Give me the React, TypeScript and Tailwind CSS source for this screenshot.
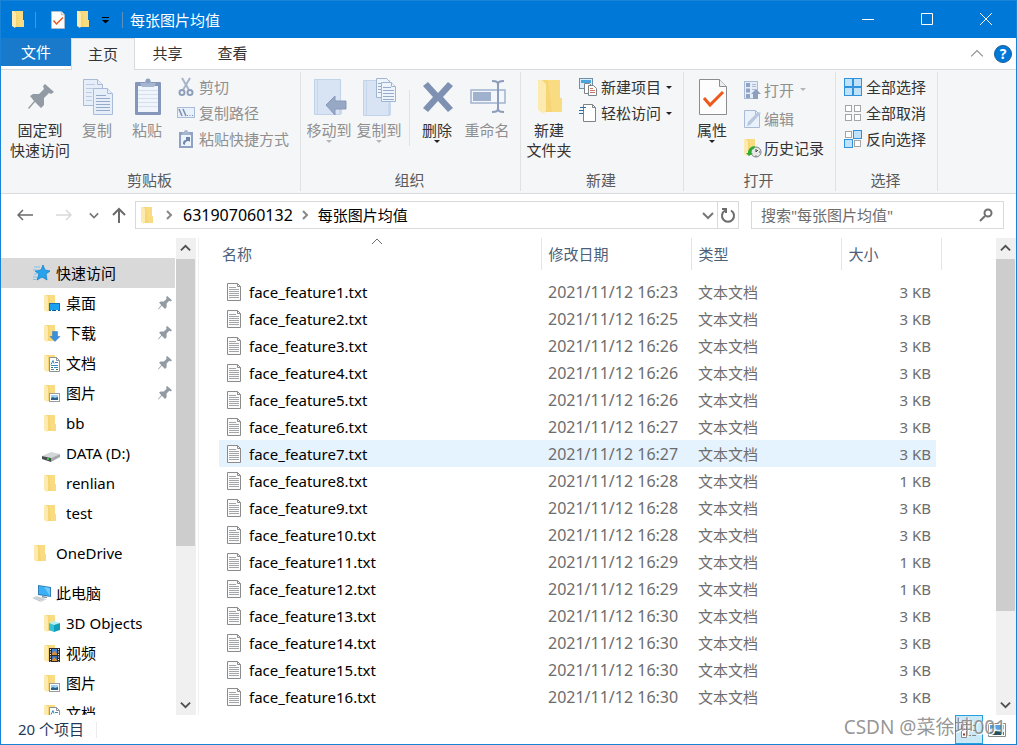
import type { ReactNode } from 'react';

const files = [
  ['16:23', 3], ['16:25', 3], ['16:26', 3], ['16:26', 3], ['16:26', 3],
  ['16:27', 3], ['16:27', 3], ['16:28', 1], ['16:28', 3], ['16:28', 3],
  ['16:29', 1], ['16:29', 1], ['16:30', 3], ['16:30', 3], ['16:30', 3],
  ['16:30', 3], ['16:31', 3], ['16:31', 3], ['16:31', 3], ['16:31', 3],
].map(([time, size], i) => ({
  name: `face_feature${i + 1}.txt`,
  date: `2021/11/12 ${time}`,
  size: `${size} KB`,
}));

/* ---------- icons ---------- */

const FolderShape = () => (
  <>
    <path d="M2 0h9v9h1v7H2z" fill="#f6d573" />
    <path d="M5 0h6v9h1v7H7z" fill="#fbdf8b" opacity="0.6" />
    <path d="M0 0h2l2 2v13l-1 2-3-2z" fill="#fdeab0" />
  </>
);

const FolderIcon = ({ className = 'w-3 h-[17px]' }: { className?: string }) => (
  <svg viewBox="0 0 12 17" className={className}>
    <FolderShape />
  </svg>
);

const SideFolder = ({ children }: { children?: ReactNode }) => (
  <svg viewBox="0 0 20 20" className="w-5 h-5">
    <g transform="translate(2 2)">
      <FolderShape />
    </g>
    {children}
  </svg>
);

const DesktopBadge = () => (
  <>
    <rect x="7.5" y="10.5" width="10" height="7" fill="#1ba1f2" stroke="#1271b8" />
    <path d="M8 17.5h9" stroke="#0b5c9e" />
    <path d="M9 17.5h1M14 17.5h2" stroke="#fff" />
  </>
);

const DownloadBadge = () => (
  <path d="M10.500 8.500h5v5h2.500l-5 5-5-5h2.500z" fill="#3d8fdb" stroke="#2b76bf" strokeWidth="0.5" />
);

const DocumentBadge = () => (
  <>
    <path d="M7.500 4.500h7l3 3v11h-10z" fill="#fff" stroke="#8c9298" />
    <path d="M14.500 4.500v3h3" fill="none" stroke="#8c9298" />
    <path d="M9 11.500l2-4 1 3M13 9.500h3M9 12.500h7M12 14.500h4M9 16.500h3" fill="none" stroke="#3b8ac4" />
    <path d="M9 14.500h2M14 16.500h2" stroke="#3a7c52" />
  </>
);

const PictureBadge = () => (
  <>
    <rect x="7.500" y="10.500" width="10" height="8" fill="#fff" stroke="#9a9da0" />
    <rect x="9" y="12" width="7" height="5" fill="#9cd0f2" />
    <path d="M9 15l2-1 2 1 3-1v3H9z" fill="#2c6284" />
  </>
);

const CubeBadge = () => (
  <>
    <path d="M12 8l6 2-6 2-5-2z" fill="#b5f0f7" />
    <path d="M7 10l5 2v7l-5-2z" fill="#35c3da" />
    <path d="M18 10l-6 2v7l6-2z" fill="#129db8" />
  </>
);

const VideoBadge = () => (
  <>
    <rect x="7" y="5" width="11" height="14" fill="#2d2d30" />
    <rect x="10" y="6" width="5" height="6" fill="#4a83d6" />
    <rect x="10" y="13" width="5" height="5" fill="#3c6fc0" />
    <path d="M10 10l3-2 2 3v1h-5zM10 17l2-3 3 3v1h-5z" fill="#d8902f" />
    <path d="M8.500 6v13M16.500 6v13" stroke="#fff" strokeDasharray="1 1.5" />
  </>
);

const StarIcon = () => (
  <svg viewBox="0 0 20 20" className="w-5 h-5">
    <path d="M11 2l2 5 5 1-4 3 1 6-5-3-5 3 2-6-4-3 6-1z" fill="#27a3ee" stroke="#1783cd" strokeWidth="0.8" />
    <path d="M2 4h6M1 7h5M2 11h3M1 14h4M1 16.500h3" stroke="#7cc3f0" />
  </svg>
);

const DriveIcon = () => (
  <svg viewBox="0 0 20 20" className="w-5 h-5">
    <path d="M0 13l9-4 9 2-9 4z" fill="#d3d6d8" />
    <path d="M0 13l9 2v4l-9-3z" fill="#4b4e50" />
    <path d="M9 15l9-4v3l-9 5z" fill="#a4a8aa" />
    <rect x="5" y="15" width="2" height="2" fill="#35c93e" />
  </svg>
);

const ComputerIcon = () => (
  <svg viewBox="0 0 20 20" className="w-5 h-5">
    <path d="M6 2l13 2v10L6 12z" fill="#2f7fb8" />
    <path d="M7 3l11 2v8L7 11z" fill="#3bb0f5" />
    <path d="M12 4l6 1v8z" fill="#70c9fb" />
    <path d="M10 13l5 1v1l-5-.5z" fill="#7e8b94" />
    <path d="M0 15l4-2 11 3-6 3z" fill="#d5dadd" />
    <path d="M2 15l6 3M5 14l6 3" stroke="#aeb6bc" strokeWidth="0.6" />
  </svg>
);

const PinIcon = ({ className = 'w-[14px] h-[14px]' }: { className?: string }) => (
  <svg viewBox="0 0 26 26" className={className}>
    <path d="M17 0l9 8-3 2-2-1-5 5v7l-3 3-6-6-6 7-1-1 6-7-4-5 3-2h6l5-5-1-3z" fill="#929ba3" />
  </svg>
);

const TextFileIcon = () => (
  <svg viewBox="0 0 14 18" className="w-[14px] h-[18px] shrink-0">
    <path d="M.5.500h10l3 3v14H.5z" fill="#fbfbfb" stroke="#8b8b8b" />
    <path d="M10.500.500v3h3" fill="none" stroke="#8b8b8b" />
    <path d="M2 4.500h7M2 6.500h10M2 8.500h10M2 10.500h10M2 12.500h10M2 14.500h10" stroke="#a3a6a8" />
  </svg>
);

const CopyPagesIcon = () => (
  <svg viewBox="0 0 32 38" className="w-8 h-[38px]">
    <g fill="#e6eef9" stroke="#a9bbd6">
      <path d="M1.500 1.500h14l5 5v21h-19z" />
      <path d="M15.500 1.500v5h5" />
      <path d="M11.500 10.500h14l5 5v21h-19z" />
      <path d="M25.500 10.500v5h5" />
    </g>
    <path d="M4 6.500h9M4 10.500h7M4 14.500h6M4 18.500h6M4 22.500h6" stroke="#bccbe1" />
    <path d="M14 17.500h10M14 20.500h14M14 23.500h14M14 26.500h14M14 29.500h14M14 32.500h14" stroke="#97abc9" />
  </svg>
);

const PasteIcon = () => (
  <svg viewBox="0 0 28 38" className="w-7 h-[38px]">
    <rect x="1" y="4" width="26" height="33" rx="1" fill="#8497bb" />
    <path d="M4 8h20v26H4z" fill="#f0f5fc" />
    <path d="M4 12.500h20M4 16.500h20M4 20.500h20M4 24.500h20M4 28.500h20" stroke="#d5e0ef" />
    <path d="M6 5h5a3 3 0 0 1 6 0h5l-2 4H8z" fill="#a7b6d0" />
    <circle cx="14" cy="3" r="2.500" fill="#8fa1c1" />
  </svg>
);

const ScissorsIcon = () => (
  <svg viewBox="0 0 18 20" className="w-[18px] h-5">
    <path d="M5 1l7 12M13 1L6 13" stroke="#a6b4ca" strokeWidth="2" fill="none" />
    <circle cx="5" cy="15.500" r="2.500" stroke="#8e9fbc" strokeWidth="2" fill="none" />
    <circle cx="13" cy="15.500" r="2.500" stroke="#8e9fbc" strokeWidth="2" fill="none" />
  </svg>
);

const CopyPathIcon = () => (
  <svg viewBox="0 0 18 20" className="w-[18px] h-5">
    <rect x=".5" y="4.500" width="17" height="10" fill="#e8f0fa" stroke="#a9bbd6" />
    <path d="M2 6l3 7M6 6l3 7" stroke="#7a8eb2" strokeWidth="1.500" />
    <path d="M10 12.500h1M12.500 12.500h1M15 12.500h1" stroke="#7a8eb2" />
  </svg>
);

const PasteShortcutIcon = () => (
  <svg viewBox="0 0 18 20" className="w-[18px] h-5">
    <rect x="2" y="3" width="14" height="16" fill="#8fa2c3" />
    <path d="M4 6h10v11H4z" fill="#edf3fb" />
    <path d="M5 4l2-1a2 2 0 0 1 4 0l2 1v2H5z" fill="#a7b6d0" />
    <path d="M6 15c0-3 1-4 3-4V8h4v5l-1-1c-3 0-4 1-4 4z" fill="#6e84ab" />
  </svg>
);

const Book = () => (
  <>
    <path d="M.5.500h26v35H.5z" fill="#d8e4f4" stroke="#c2d2e8" />
    <path d="M3.500 1v34" stroke="#c8d6ea" />
    <path d="M25 35V24l3-2v13z" fill="#c9d7ea" />
  </>
);

const MoveToIcon = () => (
  <svg viewBox="0 0 34 38" className="w-[34px] h-[38px]">
    <g transform="translate(1 1)"><Book /></g>
    <path d="M13 27l9-9v5h11v8H22v6z" fill="#97a8c5" stroke="#8799ba" />
  </svg>
);

const CopyToIcon = () => (
  <svg viewBox="0 0 34 40" className="w-[34px] h-10">
    <g transform="translate(0 3)"><Book /></g>
    <g fill="#eef4fb" stroke="#a1b4d0">
      <path d="M13.500 1.500h10l4 4v15h-14z" />
      <path d="M18.500 5.500h10l4 4v15h-14z" />
      <path d="M28.500 5.500v4h4" />
    </g>
    <path d="M15 6.500h3M15 9.500h3M15 12.500h3M15 15.500h3M20 10.500h8M20 13.500h11M20 16.500h11M20 19.500h11M20 22.500h11" stroke="#97abc9" />
  </svg>
);

const DeleteIcon = () => (
  <svg viewBox="0 0 32 38" className="w-8 h-[38px]">
    <path d="M1 8l5-4 10 11L26 4l5 4-10 11 10 11-5 4-10-11L6 34l-5-4 10-11z" fill="#7f91b2" />
  </svg>
);

const RenameIcon = () => (
  <svg viewBox="0 0 36 38" className="w-9 h-[38px]">
    <rect x="1" y="12" width="34" height="13" fill="#f3f7fc" stroke="#a0b3cf" strokeWidth="1.500" />
    <rect x="3" y="14" width="18" height="9" fill="#a0b1cd" />
    <path d="M22 3c5 0 6 1 6 4v23c0 3-1 4-6 4M34 3c-5 0-6 1-6 4v23c0 3 1 4 6 4" fill="none" stroke="#8c9dbb" strokeWidth="2" />
  </svg>
);

const NewItemIcon = () => (
  <svg viewBox="0 0 18 20" className="w-[18px] h-5">
    <rect x=".5" y="1.500" width="13" height="10" fill="#dceefb" stroke="#6f8fa4" />
    <rect x="2" y="3" width="10" height="3" fill="#4aa5dc" />
    <path d="M5.500 6.500h5l2 2v8h-7z" fill="#fff" stroke="#7d8488" />
    <path d="M9.500 8.500h5l3 3v7h-8z" fill="#fff" stroke="#7d8488" />
    <path d="M11 11.500h3M11 13.500h5M11 15.500h5" stroke="#cf7567" />
  </svg>
);

const EasyAccessIcon = () => (
  <svg viewBox="0 0 18 20" className="w-[18px] h-5">
    <path d="M4.500 1.500h9l3 3v14h-12z" fill="#fff" stroke="#7d8488" />
    <path d="M13.500 1.500v3h3" fill="none" stroke="#7d8488" />
    <path d="M1 4.500h6M0 7.500h5M0 10.500h4" stroke="#2a6ea8" />
  </svg>
);

const PropertiesIcon = ({ className = 'w-7 h-9' }: { className?: string }) => (
  <svg viewBox="0 0 28 36" className={className}>
    <path d="M.5.500h20l7 7v28H.5z" fill="#fdfdfd" stroke="#8b8d90" />
    <path d="M20.500.500v7h7" fill="#eceef0" stroke="#8b8d90" />
    <path d="M5 19l6 7 13-13" fill="none" stroke="#f0571b" strokeWidth="3" />
  </svg>
);

const OpenIcon = () => (
  <svg viewBox="0 0 18 20" className="w-[18px] h-5">
    <rect x=".5" y="1.500" width="13" height="17" fill="#e5edf8" stroke="#a9bbd6" />
    <path d="M2 3h4v4H2zM2 8.500h4v4H2zM2 14h4v4H2z" fill="#8fa3c4" />
    <path d="M8 4.500h4M8 6.500h4M8 9.500h4" stroke="#a9bbd6" />
    <path d="M12 9l5 5h-3v5h-5v-5H7z" fill="#8c9fbf" />
  </svg>
);

const EditIcon = () => (
  <svg viewBox="0 0 18 20" className="w-[18px] h-5">
    <path d="M.5 1.500h11l4 4v13H.5z" fill="#e9f1fa" stroke="#a9bbd6" />
    <path d="M11.500 1.500v4h4" fill="none" stroke="#a9bbd6" />
    <path d="M3 17l1-4L14 3l3 1L6 16z" fill="#b8c7de" />
  </svg>
);

const HistoryIcon = () => (
  <svg viewBox="0 0 18 20" className="w-[18px] h-5">
    <g transform="translate(0 1)"><FolderShape /></g>
    <circle cx="12" cy="14" r="5" fill="#e8e8e8" stroke="#7e8285" />
    <path d="M12 11v3l2-2M12 17.500v1M15 14h1" stroke="#444" fill="none" />
    <path d="M4 15c0-4 3-7 7-7l-1 3c-2 0-3 2-3 4l2 0-4 3-3-3z" fill="#2faa34" />
  </svg>
);

const SelectIcon = ({ on }: { on: boolean[] }) => (
  <svg viewBox="0 0 18 20" className="w-[18px] h-5">
    {on.map((filled, i) => (
      <rect
        key={i}
        x={(i % 2) * 9 + (filled ? 0.5 : 1.5)}
        y={Math.floor(i / 2) * 9 + (filled ? 1.5 : 2.5)}
        width={filled ? 8 : 6}
        height={filled ? 8 : 6}
        fill={filled ? '#bfe1fa' : '#fff'}
        stroke={filled ? '#2f93dd' : '#a5a5a5'}
      />
    ))}
  </svg>
);

const Caret = ({ className = '' }: { className?: string }) => (
  <svg viewBox="0 0 6 3" className={`w-[6px] h-[3px] shrink-0 ${className}`}>
    <path d="M0 0h6L3 3z" fill="currentColor" />
  </svg>
);

const Chevron = ({ d, className, stroke = 2 }: { d: string; className: string; stroke?: number }) => (
  <svg viewBox="0 0 12 12" className={className} fill="none" stroke="currentColor" strokeWidth={stroke}>
    <path d={d} />
  </svg>
);

const UP = 'M1 8l5-5 5 5';
const DOWN = 'M1 4l5 5 5-5';
const RIGHT = 'M4 2l4 4-4 4';

/* ---------- ribbon ---------- */

type BigProps = { icon: ReactNode; lines: string[]; disabled?: boolean; caret?: boolean; className?: string };

const BigButton = ({ icon, lines, disabled, caret, className = 'w-[50px]' }: BigProps) => (
  <button disabled={disabled} className={`flex flex-col items-center shrink-0 whitespace-nowrap leading-5 disabled:text-[#8f8f8f] ${className}`}>
    <span className="h-[46px] pl-[2px] flex items-center justify-center">{icon}</span>
    {lines.map((line) => (
      <span key={line}>{line}</span>
    ))}
    {caret && <Caret className={disabled ? 'text-[#b5b5b5]' : 'text-[#222]'} />}
  </button>
);

type SmallProps = { icon: ReactNode; label: string; disabled?: boolean; caret?: boolean; tall?: boolean };

const SmallButton = ({ icon, label, disabled, caret, tall }: SmallProps) => (
  <button disabled={disabled} className={`flex items-center whitespace-nowrap disabled:text-[#8f8f8f] ${tall ? 'h-[29px] gap-[2px]' : 'h-[26px] gap-1'}`}>
    {icon}
    <span>{label}</span>
    {caret && <Caret className={disabled ? 'ml-1 text-[#b5b5b5]' : 'ml-px text-[#222]'} />}
  </button>
);

const Group = ({ label, className, children }: { label: string; className: string; children: ReactNode }) => (
  <section aria-label={label} className={`flex flex-col shrink-0 my-[2px] border-r border-[#e0e1e3] ${className}`}>
    <div className="flex flex-1 items-start pt-[2px]">{children}</div>
    <div className="h-5 mb-px pr-[2px] text-center leading-5 text-[#5a5a5a]">{label}</div>
  </section>
);

const Ribbon = () => (
  <div className="flex h-[124px] shrink-0 bg-[#f5f6f7] border-b border-[#dadbdc] text-[#333]">
    <Group label="剪贴板" className="w-[300px]">
      <BigButton className="ml-1 w-[70px]" icon={<PinIcon className="w-[26px] h-[26px]" />} lines={['固定到', '快速访问']} />
      <BigButton className="w-11" disabled icon={<CopyPagesIcon />} lines={['复制']} />
      <BigButton className="w-14" disabled icon={<PasteIcon />} lines={['粘贴']} />
      <div className="ml-[2px]">
        <SmallButton disabled icon={<ScissorsIcon />} label="剪切" />
        <SmallButton disabled icon={<CopyPathIcon />} label="复制路径" />
        <SmallButton disabled icon={<PasteShortcutIcon />} label="粘贴快捷方式" />
      </div>
    </Group>
    <Group label="组织" className="w-[220px]">
      <BigButton className="ml-[3px] w-[50px]" disabled caret icon={<MoveToIcon />} lines={['移动到']} />
      <BigButton disabled caret icon={<CopyToIcon />} lines={['复制到']} />
      <div className="w-px h-14 mt-4 ml-[5px] mr-[2px] bg-[#e0e1e3]" />
      <BigButton caret icon={<DeleteIcon />} lines={['删除']} />
      <BigButton disabled icon={<RenameIcon />} lines={['重命名']} />
    </Group>
    <Group label="新建" className="w-[163px]">
      <BigButton className="ml-[3px] w-[50px]" icon={<FolderIcon className="w-6 h-9" />} lines={['新建', '文件夹']} />
      <div className="ml-[5px]">
        <SmallButton caret icon={<NewItemIcon />} label="新建项目" />
        <SmallButton caret icon={<EasyAccessIcon />} label="轻松访问" />
      </div>
    </Group>
    <Group label="打开" className="w-[152px]">
      <BigButton className="ml-1 w-12" caret icon={<PropertiesIcon />} lines={['属性']} />
      <div className="ml-2 pt-px">
        <SmallButton tall disabled caret icon={<OpenIcon />} label="打开" />
        <SmallButton tall disabled icon={<EditIcon />} label="编辑" />
        <SmallButton tall icon={<HistoryIcon />} label="历史记录" />
      </div>
    </Group>
    <Group label="选择" className="w-[102px]">
      <div className="ml-2">
        <SmallButton icon={<SelectIcon on={[true, true, true, true]} />} label="全部选择" />
        <SmallButton icon={<SelectIcon on={[false, false, false, false]} />} label="全部取消" />
        <SmallButton icon={<SelectIcon on={[false, true, true, false]} />} label="反向选择" />
      </div>
    </Group>
  </div>
);

/* ---------- window parts ---------- */

const TitleBar = () => (
  <header className="flex items-center h-[37px] shrink-0 bg-[#0078d7] text-white pl-[11px]">
    <FolderIcon />
    <div className="w-px h-4 ml-[11px] bg-[#5b92bf]" />
    <button aria-label="属性" className="ml-[15px]"><PropertiesIcon className="w-[14px] h-[18px]" /></button>
    <button aria-label="新建文件夹" className="ml-3"><FolderIcon /></button>
    <button aria-label="自定义快速访问工具栏" className="ml-3 w-[9px]">
      <svg viewBox="0 0 9 8" className="w-[9px] h-2">
        <path d="M1 1.500h7" stroke="#000" />
        <path d="M1 4h7L4.500 7.500z" fill="#000" />
      </svg>
    </button>
    <div className="w-px h-4 ml-3 mr-[7px] bg-[#5b92bf]" />
    <h1>每张图片均值</h1>
    <div className="flex ml-auto mr-px pb-px h-full">
      <button aria-label="最小化" className="w-[59px] flex items-center justify-center">
        <svg viewBox="0 0 12 12" className="w-3 h-3"><path d="M0 6.500h12" stroke="#fff" /></svg>
      </button>
      <button aria-label="最大化" className="w-[59px] flex items-center justify-center">
        <svg viewBox="0 0 12 12" className="w-3 h-3"><path d="M.5.500h11v11H.5z" stroke="#fff" fill="none" /></svg>
      </button>
      <button aria-label="关闭" className="w-[59px] flex items-center justify-center">
        <svg viewBox="0 0 12 12" className="w-3 h-3"><path d="M0 0l12 12M12 0L0 12" stroke="#fff" /></svg>
      </button>
    </div>
  </header>
);

const Tabs = () => (
  <nav className="flex h-8 shrink-0 bg-white text-[#333] border-b border-[#dadbdc]">
    <button className="w-[70px] h-7 pb-px bg-[#1979ca] text-white">文件</button>
    <button className="w-16 h-8 pb-[2px] bg-[#f5f6f7] border-x border-t border-[#dadbdc]">主页</button>
    <button className="w-[65px] pb-[2px]">共享</button>
    <button className="w-[65px] pb-[2px]">查看</button>
    <div className="ml-auto flex items-center gap-[10px] pr-1">
      <button aria-label="最小化功能区" className="text-[#8f8f8f]"><Chevron d={UP} stroke={1} className="w-[14px] h-[14px]" /></button>
      <button aria-label="帮助" className="w-[18px] h-[18px] rounded-full border border-[#1b5f9c] bg-[#0078d7] text-white text-[14px] leading-4 font-bold">?</button>
    </div>
  </nav>
);

const AddressBar = () => (
  <div className="flex items-center h-11 shrink-0 pl-4 pr-3 pb-[2px] text-[#777]">
    <button aria-label="后退">
      <svg viewBox="0 0 16 12" className="w-4 h-3" fill="none" stroke="#6b6b6b" strokeWidth="1.500"><path d="M16 6H1M6 1L1 6l5 5" /></svg>
    </button>
    <button aria-label="前进" disabled className="ml-[23px]">
      <svg viewBox="0 0 16 12" className="w-4 h-3" fill="none" stroke="#d9d9d9" strokeWidth="1.500"><path d="M0 6h15M10 1l5 5-5 5" /></svg>
    </button>
    <button aria-label="最近位置" className="ml-[17px]"><Chevron d={DOWN} className="w-[10px] h-[10px]" /></button>
    <button aria-label="上移" className="ml-3">
      <svg viewBox="0 0 16 16" className="w-4 h-4" fill="none" stroke="#6b6b6b" strokeWidth="2"><path d="M8 16V2M2 8l6-6 6 6" /></svg>
    </button>
    <div className="flex items-center flex-1 h-7 ml-2 border border-[#d9d9d9] bg-white text-black pl-[5px]">
      <FolderIcon />
      <Chevron d={RIGHT} className="w-3 h-3 ml-[10px] text-[#888]" />
      <a href="#parent" className="ml-[8px] text-[16px]">631907060132</a>
      <Chevron d={RIGHT} className="w-3 h-3 ml-[6px] text-[#888]" />
      <a href="#current" className="ml-[7px]">每张图片均值</a>
      <button aria-label="历史地址" className="ml-auto mr-[3px] text-[#777]"><Chevron d={DOWN} className="w-3 h-3" /></button>
      <button aria-label="刷新" className="flex items-center justify-center w-[21px] h-full border-l border-[#d9d9d9]">
        <svg viewBox="0 0 16 16" className="w-4 h-4" fill="none" stroke="#6b6b6b" strokeWidth="2">
          <path d="M11 3.500a6 6 0 1 1-6 0M2 2h4v4" />
        </svg>
      </button>
    </div>
    <label className="flex items-center w-[253px] h-7 ml-3 border border-[#d9d9d9] bg-white pl-[9px] pr-[10px]">
      <input
        type="search"
        aria-label="搜索"
        placeholder='搜索"每张图片均值"'
        className="flex-1 min-w-0 outline-none placeholder:text-[#6d6d6d]"
      />
      <svg viewBox="0 0 14 14" className="w-[14px] h-[14px]" fill="none" stroke="#707070" strokeWidth="2">
        <circle cx="9" cy="5" r="3.500" />
        <path d="M6 8l-5 5" />
      </svg>
    </label>
  </div>
);

const ScrollBar = ({ thumb }: { thumb: string }) => (
  <div className="flex flex-col w-5 shrink-0 bg-[#f0f0f0] text-[#505050]">
    <div className="h-[21px] pr-px flex items-center justify-center shrink-0"><Chevron d={UP} stroke={2} className="w-[11px] h-[11px]" /></div>
    <div className="flex-1 min-h-0">
      <div className={`w-[19px] bg-[#cdcdcd] ${thumb}`} />
    </div>
    <div className="h-[21px] pr-px pb-px flex items-center justify-center shrink-0"><Chevron d={DOWN} stroke={2} className="w-[11px] h-[11px]" /></div>
  </div>
);

type SideProps = { icon: ReactNode; label: string; root?: boolean; pinned?: boolean; active?: boolean };

const SideItem = ({ icon, label, root, pinned, active }: SideProps) => (
  <li>
    <a href={`#${label}`} className={`flex items-center gap-1 h-[30px] pr-[3px] whitespace-nowrap ${root ? 'pl-[31px]' : 'pl-[41px]'} ${active ? 'bg-[#d9d9d9]' : ''}`}>
      {icon}
      <span className="flex-1">{label}</span>
      {pinned && <PinIcon />}
    </a>
  </li>
);

const Sidebar = () => (
  <aside className="flex w-[198px] shrink-0 border-r border-[#f0f0f0]">
    <div className="w-[174px] mr-px pt-5 overflow-hidden">
      <ul className="mb-[10px]">
        <SideItem root active icon={<StarIcon />} label="快速访问" />
        <SideItem pinned icon={<SideFolder><DesktopBadge /></SideFolder>} label="桌面" />
        <SideItem pinned icon={<SideFolder><DownloadBadge /></SideFolder>} label="下载" />
        <SideItem pinned icon={<SideFolder><DocumentBadge /></SideFolder>} label="文档" />
        <SideItem pinned icon={<SideFolder><PictureBadge /></SideFolder>} label="图片" />
        <SideItem icon={<SideFolder />} label="bb" />
        <SideItem icon={<DriveIcon />} label="DATA (D:)" />
        <SideItem icon={<SideFolder />} label="renlian" />
        <SideItem icon={<SideFolder />} label="test" />
      </ul>
      <ul className="mb-[10px]">
        <SideItem root icon={<SideFolder />} label="OneDrive" />
      </ul>
      <ul>
        <SideItem root icon={<ComputerIcon />} label="此电脑" />
        <SideItem icon={<SideFolder><CubeBadge /></SideFolder>} label="3D Objects" />
        <SideItem icon={<SideFolder><VideoBadge /></SideFolder>} label="视频" />
        <SideItem icon={<SideFolder><PictureBadge /></SideFolder>} label="图片" />
        <SideItem icon={<SideFolder><DocumentBadge /></SideFolder>} label="文档" />
      </ul>
    </div>
    <ScrollBar thumb="h-[66%]" />
  </aside>
);

const FileList = () => (
  <div className="flex-1 min-w-0 overflow-hidden pl-5">
    <table className="table-fixed w-[722px] whitespace-nowrap">
      <colgroup>
        <col className="w-[322px]" />
        <col className="w-[150px]" />
        <col className="w-[150px]" />
        <col className="w-[95px]" />
        <col className="w-[5px]" />
      </colgroup>
      <thead>
        <tr className="h-8 text-left text-[#4c607a]">
          <th className="relative p-0 pl-[3px] font-normal border-r border-[#e5e5e5]">
            名称
            <Chevron d={UP} stroke={1} className="absolute left-[152px] -top-[2px] w-3 h-3 text-[#6d6d6d]" />
          </th>
          <th className="p-0 pl-[7px] font-normal border-r border-[#e5e5e5]">修改日期</th>
          <th className="p-0 pl-[7px] font-normal border-r border-[#e5e5e5]">类型</th>
          <th colSpan={2} className="p-0 pl-[7px] font-normal border-r border-[#e5e5e5]">大小</th>
        </tr>
      </thead>
      <tbody className="text-[#6d6d6d]">
        <tr className="h-2"><td colSpan={5} className="p-0" /></tr>
        {files.map((file, i) => {
          const bg = i === 6 ? 'bg-[#e5f3ff]' : '';
          return (
            <tr key={file.name} className="h-[27px]">
              <td className={`p-0 ${bg}`}>
                <div className="flex items-center gap-2 pl-2 text-black">
                  <TextFileIcon />
                  <span>{file.name}</span>
                </div>
              </td>
              <td className={`p-0 pl-[7px] text-[16px] leading-5 ${bg}`}>{file.date}</td>
              <td className={`p-0 pl-[7px] ${bg}`}>文本文档</td>
              <td className={`p-0 pr-[5px] text-right ${bg}`}>{file.size}</td>
              <td className="p-0" />
            </tr>
          );
        })}
      </tbody>
    </table>
  </div>
);

const StatusBar = () => (
  <footer className="relative flex items-center h-[29px] shrink-0 pl-[17px] pr-[10px] text-[#1e395b]">
    <span className="pb-[2px]">20 个项目</span>
    <div className="w-px h-4 ml-3 bg-[#ececec]" />
    <button aria-label="详细信息" className="ml-auto w-7 h-full border border-[#26a0da] bg-[#cbe8f6] flex items-center justify-center">
      <svg viewBox="0 0 16 16" className="w-4 h-4">
        <path d="M.5.500h5v15h-5z" fill="#fff" stroke="#8a8a8a" />
        <path d="M2 3.500h2M2 7.500h2" stroke="#3c79b5" strokeWidth="2" />
        <path d="M2 12.500h2" stroke="#a5341f" strokeWidth="2" />
        <path d="M7 3.500h3M11 3.500h4M7 8.500h3M11 8.500h4M7 13.500h3M11 13.500h4" stroke="#7f8a90" />
      </svg>
    </button>
    <button aria-label="大缩略图" className="ml-[5px]">
      <svg viewBox="0 0 18 14" className="w-[18px] h-[14px]">
        <path d="M.5.500h17v13H.5z" fill="#fff" stroke="#8a8a8a" />
        <path d="M2 2h14v10H2z" fill="#5b9fe2" />
        <path d="M2 6l4-1 4 2 6-1v3H2z" fill="#d7ecfa" />
        <path d="M2 10l5-2 9 1v3H2z" fill="#26505e" />
      </svg>
    </button>
    <span className="absolute right-[10px] top-0 text-[19px] leading-6 whitespace-nowrap text-[#7a7a7a]/80 [text-shadow:1px_1px_0_#ffffff]">
      CSDN @菜徐坤001
    </span>
  </footer>
);

export default function App() {
  return (
    <div className="flex flex-col h-screen overflow-hidden border border-[#1883d7] bg-white text-black text-[15px] leading-5 font-['Noto_Sans','Noto_Sans_CJK_SC',sans-serif]">
      <TitleBar />
      <Tabs />
      <Ribbon />
      <AddressBar />
      <main className="flex flex-1 min-h-0">
        <Sidebar />
        <FileList />
        <ScrollBar thumb="h-[81%]" />
      </main>
      <StatusBar />
    </div>
  );
}
